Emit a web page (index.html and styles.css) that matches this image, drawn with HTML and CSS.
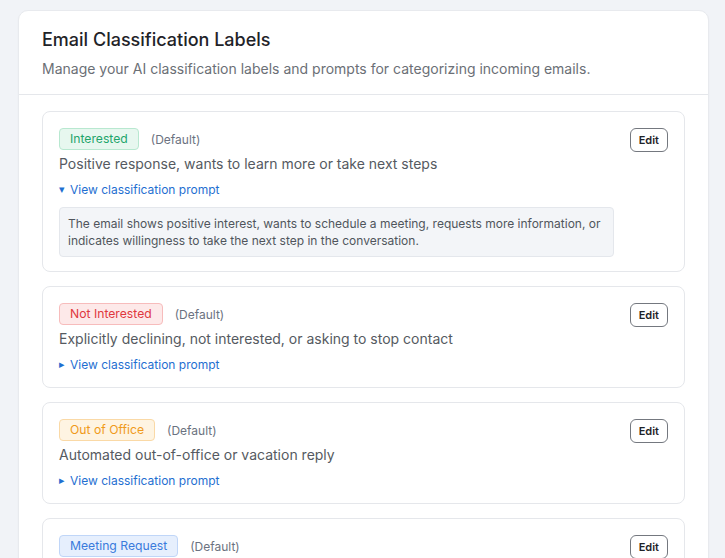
FILE: index.html
```html
<!DOCTYPE html>
<html lang="en">
<head>
<meta charset="utf-8">
<title>Email Classification Labels</title>
<link rel="stylesheet" href="styles.css">
</head>
<body>
<div class="panel">
  <div class="panel-header">
    <h1 class="title">Email Classification Labels</h1>
    <p class="subtitle">Manage your AI classification labels and prompts for categorizing incoming emails.</p>
  </div>
  <div class="panel-body">
    <div class="label-card">
      <div class="label-main">
        <div class="label-head">
          <span class="badge badge-green">Interested</span>
          <span class="default">(Default)</span>
        </div>
        <div class="desc">Positive response, wants to learn more or take next steps</div>
        <div class="toggle"><span class="caret">▾</span>View classification prompt</div>
        <div class="prompt">The email shows positive interest, wants to schedule a meeting, requests more information, or indicates willingness to take the next step in the conversation.</div>
      </div>
      <button class="edit">Edit</button>
    </div>

    <div class="label-card">
      <div class="label-main">
        <div class="label-head">
          <span class="badge badge-red">Not Interested</span>
          <span class="default">(Default)</span>
        </div>
        <div class="desc">Explicitly declining, not interested, or asking to stop contact</div>
        <div class="toggle"><span class="caret">▸</span>View classification prompt</div>
      </div>
      <button class="edit">Edit</button>
    </div>

    <div class="label-card">
      <div class="label-main">
        <div class="label-head">
          <span class="badge badge-orange">Out of Office</span>
          <span class="default">(Default)</span>
        </div>
        <div class="desc">Automated out-of-office or vacation reply</div>
        <div class="toggle"><span class="caret">▸</span>View classification prompt</div>
      </div>
      <button class="edit">Edit</button>
    </div>

    <div class="label-card">
      <div class="label-main">
        <div class="label-head">
          <span class="badge badge-blue">Meeting Request</span>
          <span class="default">(Default)</span>
        </div>
        <div class="desc">Wants to schedule a call or meeting</div>
        <div class="toggle"><span class="caret">▸</span>View classification prompt</div>
      </div>
      <button class="edit">Edit</button>
    </div>
  </div>
</div>
</body>
</html>
```
FILE: styles.css
```css
* { box-sizing: border-box; }

html, body {
  margin: 0;
  background: #f1f3f7;
}

body {
  padding: 10px 16px 0 18px;
  font-family: Inter, "Noto Sans", "Liberation Sans", sans-serif;
  color: #1f2937;
}

.panel {
  background: #ffffff;
  border: 1px solid #e8eaee;
  border-radius: 10px;
  box-shadow: 0 1px 2px rgba(16, 24, 40, 0.04);
}

.panel-header {
  padding: 15px 23px 15px;
  border-bottom: 1px solid #e5e7eb;
}

.title {
  margin: 0;
  font-size: 18px;
  line-height: 28px;
  font-weight: 500;
  color: #1f2328;
}

.subtitle {
  margin: 5px 0 0;
  font-size: 14px;
  line-height: 20px;
  color: #6b6f76;
}

.panel-body {
  padding: 16px 23px;
  display: flex;
  flex-direction: column;
  gap: 14px;
}

.label-card {
  display: flex;
  align-items: flex-start;
  gap: 16px;
  border: 1px solid #e5e7eb;
  border-radius: 8px;
  padding: 16px 16px 14px;
  background: #fff;
}

.label-main {
  flex: 1;
  min-width: 0;
}

.label-head {
  display: flex;
  align-items: center;
  gap: 12px;
  height: 22px;
}

.badge {
  display: inline-block;
  font-size: 12.2px;
  line-height: 20px;
  padding: 0 10px;
  border: 1px solid;
  border-radius: 4px;
}

.badge-green { background: #e7f7ef; border-color: #b8e8d0; color: #1fa56b; }
.badge-red { background: #fde9e9; border-color: #f7bcbc; color: #e0383e; }
.badge-orange { background: #fef4e2; border-color: #fad9a6; color: #f09a1a; }
.badge-blue { background: #e6effd; border-color: #c0d6f8; color: #3a7bdc; }

.default {
  font-size: 12px;
  color: #6b7280;
}

.desc {
  margin-top: 4px;
  font-size: 14px;
  line-height: 20px;
  color: #555a61;
}

.toggle {
  display: flex;
  align-items: center;
  height: 16px;
  margin-top: 8px;
  font-size: 12px;
  line-height: 16px;
  color: #1f6fd1;
}

.caret {
  width: 11px;
  font-size: 11px;
  line-height: 16px;
  font-family: "DejaVu Sans", sans-serif;
}

.prompt {
  margin-top: 9px;
  padding: 7px 8px 7px;
  background: #f3f5f8;
  border: 1px solid #e4e7ec;
  border-radius: 4px;
  font-size: 12px;
  line-height: 17px;
  color: #50555c;
}

.edit {
  flex: none;
  font-family: inherit;
  font-size: 11px;
  font-weight: 600;
  line-height: 16px;
  padding: 3px 8px;
  color: #1f2328;
  background: #fff;
  border: 1px solid #74787f;
  border-radius: 6px;
}
```
